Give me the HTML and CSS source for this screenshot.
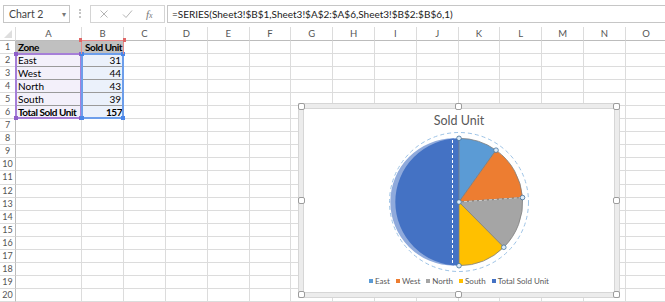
FILE: index.html
```html
<!DOCTYPE html>
<html>
<head>
	<title>Sold Unit chart</title>
	<link rel="stylesheet" href="styles.css">
</head>
<body>
	<div class="app">
		<div class="toolbar">
			<div class="name-box">
				<span>Chart 2</span>
				<span class="drop">&#9662;</span>
			</div>
			<span class="grip"></span>
			<div class="fx-box">
				<svg class="tool-icon" width="10" height="10" viewBox="0 0 10 10">
					<path d="M1.5 1.5 L8.5 8.5 M8.5 1.5 L1.5 8.5" stroke="#b4b4b4" stroke-width="1" fill="none"/>
				</svg>
				<svg class="tool-icon" width="11" height="10" viewBox="0 0 11 10">
					<path d="M1 5.5 L4 8.5 L10 1.5" stroke="#b4b4b4" stroke-width="1" fill="none"/>
				</svg>
				<span class="fx">f<small>x</small></span>
			</div>
			<div class="formula">=SERIES(Sheet3!$B$1,Sheet3!$A$2:$A$6,Sheet3!$B$2:$B$6,1)</div>
		</div>

		<div class="sheet-wrap">
			<div class="sheet" id="sheet"></div>
			<div class="sheet overlay">
				<div class="range range-cat"><i class="h tl"></i><i class="h tr"></i><i class="h bl"></i><i class="h br"></i></div>
				<div class="range range-val"><i class="h tl"></i><i class="h tr"></i><i class="h bl"></i><i class="h br"></i></div>
				<div class="range range-name"><i class="h tl"></i><i class="h tr"></i></div>
			</div>
		</div>

		<div class="chart">
			<i class="grab g-tl"></i><i class="grab g-tm"></i><i class="grab g-tr"></i>
			<i class="grab g-ml"></i><i class="grab g-mr"></i>
			<i class="grab g-bl"></i><i class="grab g-bm"></i><i class="grab g-br"></i>
			<div class="chart-title">Sold Unit</div>
			<svg class="pie" width="150" height="142" viewBox="0 0 150 142">
				<circle cx="75" cy="70" r="69.5" fill="none" stroke="#9dc3e6" stroke-width="1" stroke-dasharray="4 3"/>
				<path d="M70 70 L70 133.7 A63.7 63.7 0 0 1 70 6.3 Z" fill="#8faadc"/>
				<path d="M75 70 L75 133.7 A63.7 63.7 0 0 1 75 6.3 Z" fill="#4472c4"/>
				<line x1="68.5" y1="8" x2="68.5" y2="132" stroke="#ffffff" stroke-width="1" stroke-dasharray="3 2"/>
				<g stroke="#7f7f7f" stroke-width="0.8">
					<path d="M75 70 L75 6.3 A63.7 63.7 0 0 1 112.03 18.17 Z" fill="#5b9bd5"/>
					<path d="M75 70 L112.03 18.17 A63.7 63.7 0 0 1 138.54 65.54 Z" fill="#ed7d31"/>
					<path d="M75 70 L138.54 65.54 A63.7 63.7 0 0 1 119.81 115.27 Z" fill="#a5a5a5"/>
					<path d="M75 70 L119.81 115.27 A63.7 63.7 0 0 1 75 133.7 Z" fill="#ffc000"/>
				</g>
				<line x1="75" y1="70" x2="138.54" y2="65.54" stroke="#d0d0d0" stroke-width="1" stroke-dasharray="3 2"/>
				<g fill="#deebf7" stroke="#41719c" stroke-width="0.8">
					<circle cx="75" cy="6.3" r="2.3"/>
					<circle cx="112.03" cy="18.17" r="2.3"/>
					<circle cx="138.54" cy="65.54" r="2.3"/>
					<circle cx="119.81" cy="115.27" r="2.3"/>
					<circle cx="75" cy="133.7" r="2.3"/>
					<circle cx="75" cy="70" r="2.3"/>
				</g>
			</svg>
			<div class="legend">
				<span class="key"><i style="background:#5b9bd5"></i>East</span>
				<span class="key"><i style="background:#ed7d31"></i>West</span>
				<span class="key"><i style="background:#a5a5a5"></i>North</span>
				<span class="key"><i style="background:#ffc000"></i>South</span>
				<span class="key"><i style="background:#4472c4"></i>Total Sold Unit</span>
			</div>
		</div>
	</div>

	<script>
		var sheet = document.getElementById('sheet');
		var columns = 'ABCDEFGHIJKLMNO'.split('');
		var rows = {
			1: ['Zone', 'Sold Unit'],
			2: ['East', 31],
			3: ['West', 44],
			4: ['North', 43],
			5: ['South', 39],
			6: ['Total Sold Unit', 157]
		};

		function addCell(className, text) {
			var cell = document.createElement('div');
			cell.className = className;
			if (text !== undefined) cell.textContent = text;
			sheet.appendChild(cell);
			return cell;
		}

		// header row
		addCell('corner');
		for (var c = 0; c < columns.length; c++) {
			addCell('col-head', columns[c]);
		}

		// rows 1 to 20
		for (var r = 1; r <= 20; r++) {
			addCell('row-head', r);
			for (var c = 0; c < columns.length; c++) {
				var name = 'cell';
				var text = undefined;
				if (rows[r] && c < 2) {
					text = rows[r][c];
					name += ' data';
					name += c == 0 ? ' label' : ' num';
					if (r == 1) name += ' head';
					else if (c == 0) name += ' cat';
					else name += ' val';
					if (r == 1 || r == 6) name += ' bold';
				}
				addCell(name, text);
			}
		}
	</script>
</body>
</html>
```

FILE: styles.css
```css
html, body {
    margin: 0;
    padding: 0;
    background: #ffffff;
    overflow: hidden;
}

.app {
    position: relative;
    width: 665px;
    height: 302px;
    overflow: hidden;
    font-family: Lato, "Liberation Sans", sans-serif;
    color: #000000;
}

/* formula bar */

.toolbar {
    display: flex;
    align-items: center;
    height: 27px;
    padding-left: 3px;
    box-sizing: border-box;
}

.name-box {
    display: flex;
    align-items: center;
    justify-content: space-between;
    width: 67px;
    height: 18px;
    box-sizing: border-box;
    border: 1px solid #c6c6c6;
    padding: 0 3px 0 5px;
    font-size: 10.5px;
    color: #444444;
}

.name-box .drop {
    font-size: 8px;
    color: #777777;
}

.grip {
    width: 0;
    height: 9px;
    margin: 0 9px;
    border-left: 2px dotted #c4c4c4;
}

.fx-box {
    display: flex;
    align-items: center;
    width: 75px;
    height: 18px;
    box-sizing: border-box;
    border: 1px solid #d4d4d4;
    padding: 0 6px 0 8px;
    gap: 13px;
}

.fx {
    font-family: "Liberation Serif", serif;
    font-style: italic;
    font-size: 11px;
    color: #777777;
}

.fx small {
    font-size: 8px;
}

.formula {
    flex: 1;
    height: 18px;
    margin-left: 2px;
    box-sizing: border-box;
    border: 1px solid #c6c6c6;
    border-right: none;
    padding-left: 4px;
    font-size: 10px;
    line-height: 16px;
    color: #222222;
    white-space: nowrap;
}

/* grid */

.sheet-wrap {
    position: relative;
}

.sheet {
    display: grid;
    grid-template-columns: 16px 66px 42px 42px repeat(12, 41.8px);
    grid-template-rows: 14px repeat(20, 13.05px);
    font-size: 10px;
}

.overlay {
    position: absolute;
    left: 0;
    top: 0;
    right: 0;
    bottom: 0;
    pointer-events: none;
}

.corner,
.col-head,
.row-head,
.cell {
    box-sizing: border-box;
    border-right: 1px solid #dcdcdc;
    border-bottom: 1px solid #dcdcdc;
    white-space: nowrap;
}

.corner {
    position: relative;
    border-bottom-color: #bcbcbc;
}

.corner::after {
    content: "";
    position: absolute;
    right: 3px;
    bottom: 2px;
    border-left: 8px solid transparent;
    border-bottom: 8px solid #dedede;
}

.col-head {
    border-bottom-color: #bcbcbc;
    text-align: center;
    font-size: 9.5px;
    line-height: 14px;
    color: #555555;
}

.row-head {
    border-right-color: #bcbcbc;
    text-align: center;
    font-size: 9px;
    line-height: 12px;
    color: #555555;
}

.cell {
    padding: 0 2px;
    line-height: 12px;
    font-size: 10px;
}

.cell.num {
    text-align: right;
}

.cell.data {
    border-bottom-color: #9a9a9a;
}

.cell.head {
    background: #c0c0c0;
}

.cell.cat {
    background: #f3f0fa;
}

.cell.val {
    background: #ebf1fb;
}

.cell.bold {
    font-weight: bold;
    letter-spacing: -0.45px;
    padding: 0 1px 0 2px;
}

/* highlighted series ranges */

.range {
    position: relative;
    margin: -1px 0 0 -1px;
    box-sizing: border-box;
}

.range-cat {
    grid-column: 2;
    grid-row: 3 / 8;
    border: 2px solid #a67fd8;
}

.range-val {
    grid-column: 3;
    grid-row: 3 / 8;
    border: 2px solid #6d9eeb;
}

.range-name {
    grid-column: 3;
    grid-row: 2;
    border: 1px solid #e58a8a;
    border-bottom: none;
}

.h {
    position: absolute;
    width: 4px;
    height: 4px;
}

.range-cat .h { background: #8e5ec8; }
.range-val .h { background: #4a86e8; }
.range-name .h { background: #e06666; width: 3px; height: 4px; }

.h.tl { left: -3px; top: -3px; }
.h.tr { right: -3px; top: -3px; }
.h.bl { left: -3px; bottom: -3px; }
.h.br { right: -3px; bottom: -3px; }

/* chart */

.chart {
    position: absolute;
    left: 299px;
    top: 104px;
    width: 320px;
    height: 193px;
    box-sizing: border-box;
    border: 4px solid #ececec;
    box-shadow: 0 0 0 1px #d6d6d6, inset 0 0 0 1px #d6d6d6;
    background: #ffffff;
    display: flex;
    flex-direction: column;
    align-items: center;
}

.grab {
    position: absolute;
    width: 5px;
    height: 5px;
    background: #ffffff;
    border: 1px solid #9c9c9c;
    border-radius: 2px;
}

.g-tl { left: -5px; top: -5px; }
.g-tm { left: 152px; top: -5px; }
.g-tr { right: -5px; top: -5px; }
.g-ml { left: -5px; top: 89px; }
.g-mr { right: -5px; top: 89px; }
.g-bl { left: -5px; bottom: -5px; }
.g-bm { left: 152px; bottom: -5px; }
.g-br { right: -5px; bottom: -5px; }

.chart-title {
    margin-top: 5px;
    font-size: 12.5px;
    line-height: 16px;
    color: #595959;
}

.pie {
    display: block;
    margin-top: 3px;
}

.legend {
    display: flex;
    gap: 6px;
    margin-top: 2px;
    font-size: 8px;
    line-height: 10px;
    color: #595959;
}

.key {
    display: flex;
    align-items: center;
    gap: 2px;
}

.key i {
    width: 4px;
    height: 4px;
}
```
